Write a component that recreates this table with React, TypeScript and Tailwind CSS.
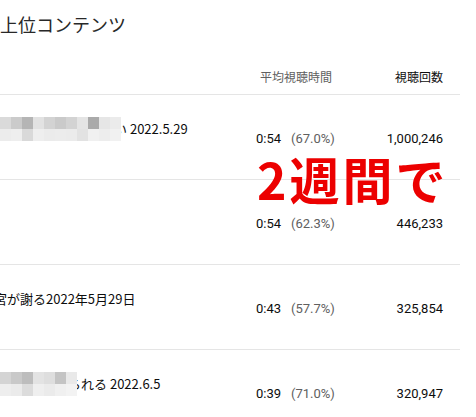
import React from "react";

const jp = { fontFamily: '"Noto Sans CJK JP", "Noto Sans", sans-serif' };

function Blur({ top, bottom }: { top: string[]; bottom: string[] }) {
  return (
    <div className="absolute left-0 top-1/2 -translate-y-1/2 flex flex-col">
      <div className="flex">
        {top.map((c, i) => (
          <div key={i} className={`h-[12px] w-[11px] ${c}`} />
        ))}
      </div>
      <div className="flex">
        {bottom.map((c, i) => (
          <div key={i} className={`h-[12px] w-[11px] ${c}`} />
        ))}
      </div>
    </div>
  );
}

const blur1Top = [
  "bg-[#dadada]", "bg-[#cbcbcb]", "bg-[#b5b5b5]", "bg-[#e2e2e2]", "bg-[#d3d3d3]",
  "bg-[#cacaca]", "bg-[#d3d3d3]", "bg-[#e4e4e4]", "bg-[#aaaaaa]", "bg-[#e6e6e6]", "bg-[#ebebeb]",
];
const blur1Bottom = [
  "bg-[#ececec]", "bg-[#eeeeee]", "bg-[#d9d9d9]", "bg-[#eeeeee]", "bg-[#ebebeb]",
  "bg-[#ececec]", "bg-[#ebebeb]", "bg-[#e2e2e2]", "bg-[#f0f0f0]", "bg-[#ededed]", "bg-[#f1f1f1]",
];
const blur4Top = [
  "bg-[#d4d4d4]", "bg-[#c9c9c9]", "bg-[#bdbdbd]", "bg-[#e3e3e3]", "bg-[#dedede]", "bg-[#c4c4c4]", "bg-[#e9e9e9]",
];
const blur4Bottom = [
  "bg-[#eeeeee]", "bg-[#ebebeb]", "bg-[#dcdcdc]", "bg-[#efefef]", "bg-[#ebebeb]", "bg-[#f0f0f0]", "bg-[#f3f3f3]",
];

type Row = { title: React.ReactNode; time: string; pct: string; views: string };

export default function App() {
  const rows: Row[] = [
    {
      title: (
        <div className="relative h-[26px] flex items-center">
          <span className="ml-[114px] text-[13px] text-[#0d0d0d]" style={jp}>
            い 2022.5.29
          </span>
          <Blur top={blur1Top} bottom={blur1Bottom} />
        </div>
      ),
      time: "0:54",
      pct: "(67.0%)",
      views: "1,000,246",
    },
    { title: null, time: "0:54", pct: "(62.3%)", views: "446,233" },
    {
      title: (
        <div className="h-[26px] flex items-center">
          <span className="ml-[-6px] text-[13px] text-[#0d0d0d] whitespace-nowrap" style={jp}>
            宮が謝る2022年5月29日
          </span>
        </div>
      ),
      time: "0:43",
      pct: "(57.7%)",
      views: "325,854",
    },
    {
      title: (
        <div className="relative h-[26px] flex items-center">
          <span className="ml-[68px] text-[13px] text-[#0d0d0d] whitespace-nowrap" style={jp}>
            られる 2022.6.5
          </span>
          <Blur top={blur4Top} bottom={blur4Bottom} />
        </div>
      ),
      time: "0:39",
      pct: "(71.0%)",
      views: "320,947",
    },
  ];

  return (
    <div className="relative w-[476px] h-[417px] bg-white overflow-hidden" style={jp}>
      <div className="w-[460px]">
        <div className="h-[60px] pt-[11px]">
          <h1 className="text-[18px] leading-[26px] text-[#282828] font-normal">上位コンテンツ</h1>
        </div>
        <div className="h-[35px] flex items-center text-[12px] border-b border-[#e5e5e5]">
          <div className="flex-1" />
          <div className="w-[72px] ml-0 text-[#606060] mr-[62px]">平均視聴時間</div>
          <div className="w-[49px] text-right text-[#0d0d0d] mr-[17px]">視聴回数</div>
        </div>
        {rows.map((r, i) => (
          <div key={i} className="h-[85px] border-b border-[#e5e5e5] flex">
            <div className="flex-1 pt-[21px]">{r.title}</div>
            <div
              className="flex items-center text-[13px] text-[#0d0d0d] pt-[4px]"
              style={{ fontFamily: 'Roboto, "Noto Sans", sans-serif' }}
            >
              <span className="w-[35px]">{r.time}</span>
              <span className="w-[60px] text-[#606060]">{r.pct}</span>
              <span className="w-[92px] text-right mr-[17px]">{r.views}</span>
            </div>
          </div>
        ))}
      </div>
      <div
        className="absolute left-[257px] top-[143px] text-[50px] leading-[70px] font-bold text-[#ec0000] tracking-[3px] whitespace-nowrap"
        style={jp}
      >
        2週間で
      </div>
    </div>
  );
}
